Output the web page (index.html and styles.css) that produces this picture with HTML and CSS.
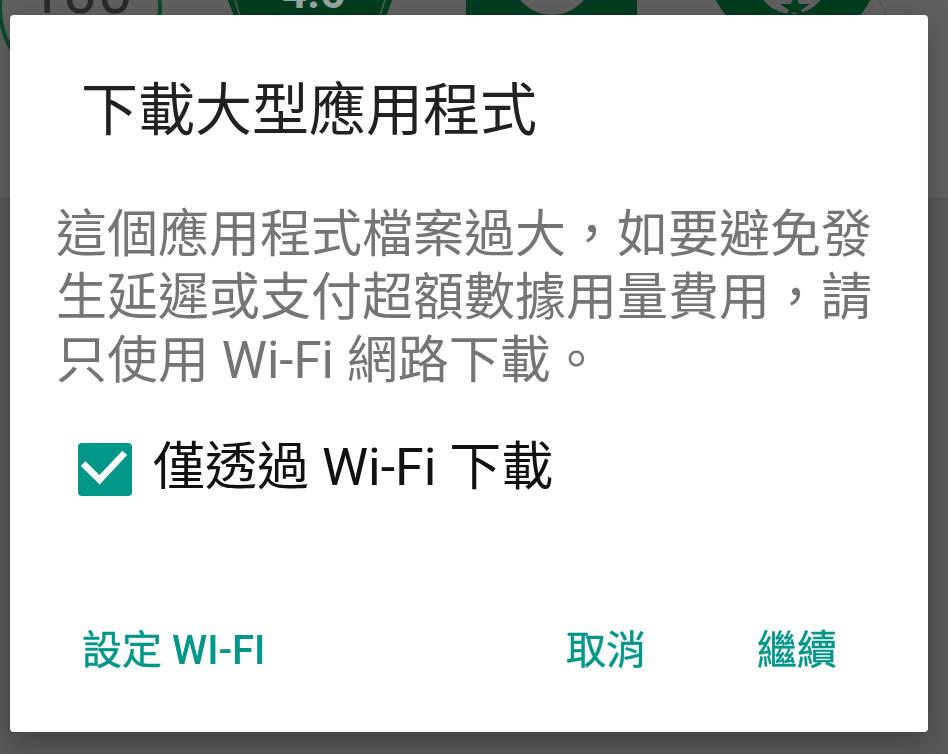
FILE: index.html
```html
<!DOCTYPE html>
<html lang="zh-Hant">
<head>
<meta charset="utf-8">
<title>下載大型應用程式</title>
<link rel="stylesheet" href="styles.css">
</head>
<body>
<div class="backdrop" aria-hidden="true">
  <svg class="backdrop-art" width="948" height="754" viewBox="0 0 948 754">
    <rect x="0" y="0" width="948" height="198" fill="#606060"/>
    <rect x="0" y="198" width="948" height="2" fill="#535353"/>
    <rect x="0" y="200" width="948" height="554" fill="#595959"/>
    <circle cx="80" cy="8" r="80" fill="none" stroke="#0b4a2b" stroke-width="4"/>
    <text x="28" y="13" font-family="Roboto, sans-serif" font-size="62" fill="#2a2a2a">100</text>
    <polygon points="224,-10 396,-10 386,16 234,16" fill="#033d20"/>
    <polygon points="232,-10 388,-10 380,16 240,16" fill="none" stroke="#4f5f55" stroke-width="1.5"/>
    <text x="282" y="8" font-family="Roboto, sans-serif" font-weight="700" font-size="44" fill="#9aa39d">4.6</text>
    <rect x="466" y="-20" width="171" height="36" fill="#033d20"/>
    <circle cx="552" cy="-26" r="41" fill="#606060"/>
    <circle cx="793" cy="-40" r="87" fill="#033d20"/>
    <circle cx="792" cy="-22" r="36" fill="#606060"/>
    <polygon points="795,-6 799,4 810,4 801,10 804,16 795,12 786,16 789,10 780,4 791,4" fill="#033d20"/>
    <path d="M879 0 Q884 8 886 16" fill="none" stroke="#555" stroke-width="1.5"/>
    <rect x="20" y="115" width="4" height="2" fill="#333"/>
  </svg>
</div>

<div class="dialog" role="dialog">
  <h1 class="dialog-title">下載大型應用程式</h1>
  <p class="dialog-body">這個應用程式檔案過大，如要避免發生延遲或支付超額數據用量費用，請只使用 Wi-Fi 網路下載。</p>
  <label class="check-row">
    <span class="checkbox">
      <svg viewBox="0 0 24 24" width="54" height="54"><path d="M3.3 10.6 L9.6 16.8 L19.8 5.9" fill="none" stroke="#fff" stroke-width="2.9" stroke-linecap="square"/></svg>
    </span>
    <span class="check-label">僅透過 Wi-Fi 下載</span>
  </label>
  <div class="actions">
    <span class="btn">設定 <span class="btn-latin">WI-FI</span></span>
    <span class="spacer"></span>
    <span class="btn btn-cancel">取消</span>
    <span class="btn">繼續</span>
  </div>
</div>
</body>
</html>
```

FILE: styles.css
```css
html, body {
  margin: 0;
  padding: 0;
  width: 948px;
  height: 754px;
  overflow: hidden;
  background: #595959;
  font-family: Roboto, "Noto Sans CJK TC", "Noto Sans", sans-serif;
}

.backdrop {
  position: fixed;
  left: 0;
  top: 0;
  width: 948px;
  height: 754px;
  z-index: 0;
}

.backdrop-art {
  display: block;
}

.dialog {
  position: relative;
  z-index: 1;
  box-sizing: border-box;
  width: 918px;
  height: 717px;
  margin: 15px 0 0 10px;
  background: #ffffff;
  border-radius: 4px;
  box-shadow: 0 10px 28px rgba(0, 0, 0, 0.28);
  padding-top: 60px;
  display: flex;
  flex-direction: column;
}

.dialog-title {
  margin: 0;
  padding-left: 71px;
  font-size: 57px;
  line-height: 72px;
  font-weight: 400;
  color: #212121;
}

.dialog-body {
  margin: 56px 0 0 0;
  padding: 0 40px 0 46px;
  font-size: 51px;
  line-height: 63px;
  color: #757575;
}

.check-row {
  margin-top: 50px;
  padding-left: 68px;
  display: flex;
  align-items: center;
  height: 54px;
}

.checkbox {
  width: 54px;
  height: 53px;
  border-radius: 4px;
  background: #009688;
  display: flex;
  align-items: center;
  justify-content: center;
  flex: none;
}

.checkbox svg {
  display: block;
}

.check-label {
  margin-left: 21px;
  margin-bottom: 3px;
  font-size: 52px;
  line-height: 54px;
  color: #111111;
}

.actions {
  margin-top: 131px;
  padding: 0 91px 0 72px;
  display: flex;
  align-items: center;
}

.btn {
  font-size: 40px;
  line-height: 48px;
  font-weight: 400;
  color: #009688;
  white-space: nowrap;
  -webkit-text-stroke: 0.4px #009688;
}

.btn-latin {
  font-weight: 500;
  -webkit-text-stroke: 0;
}

.spacer {
  flex: 1;
}

.btn-cancel {
  margin-right: 111px;
}
```
